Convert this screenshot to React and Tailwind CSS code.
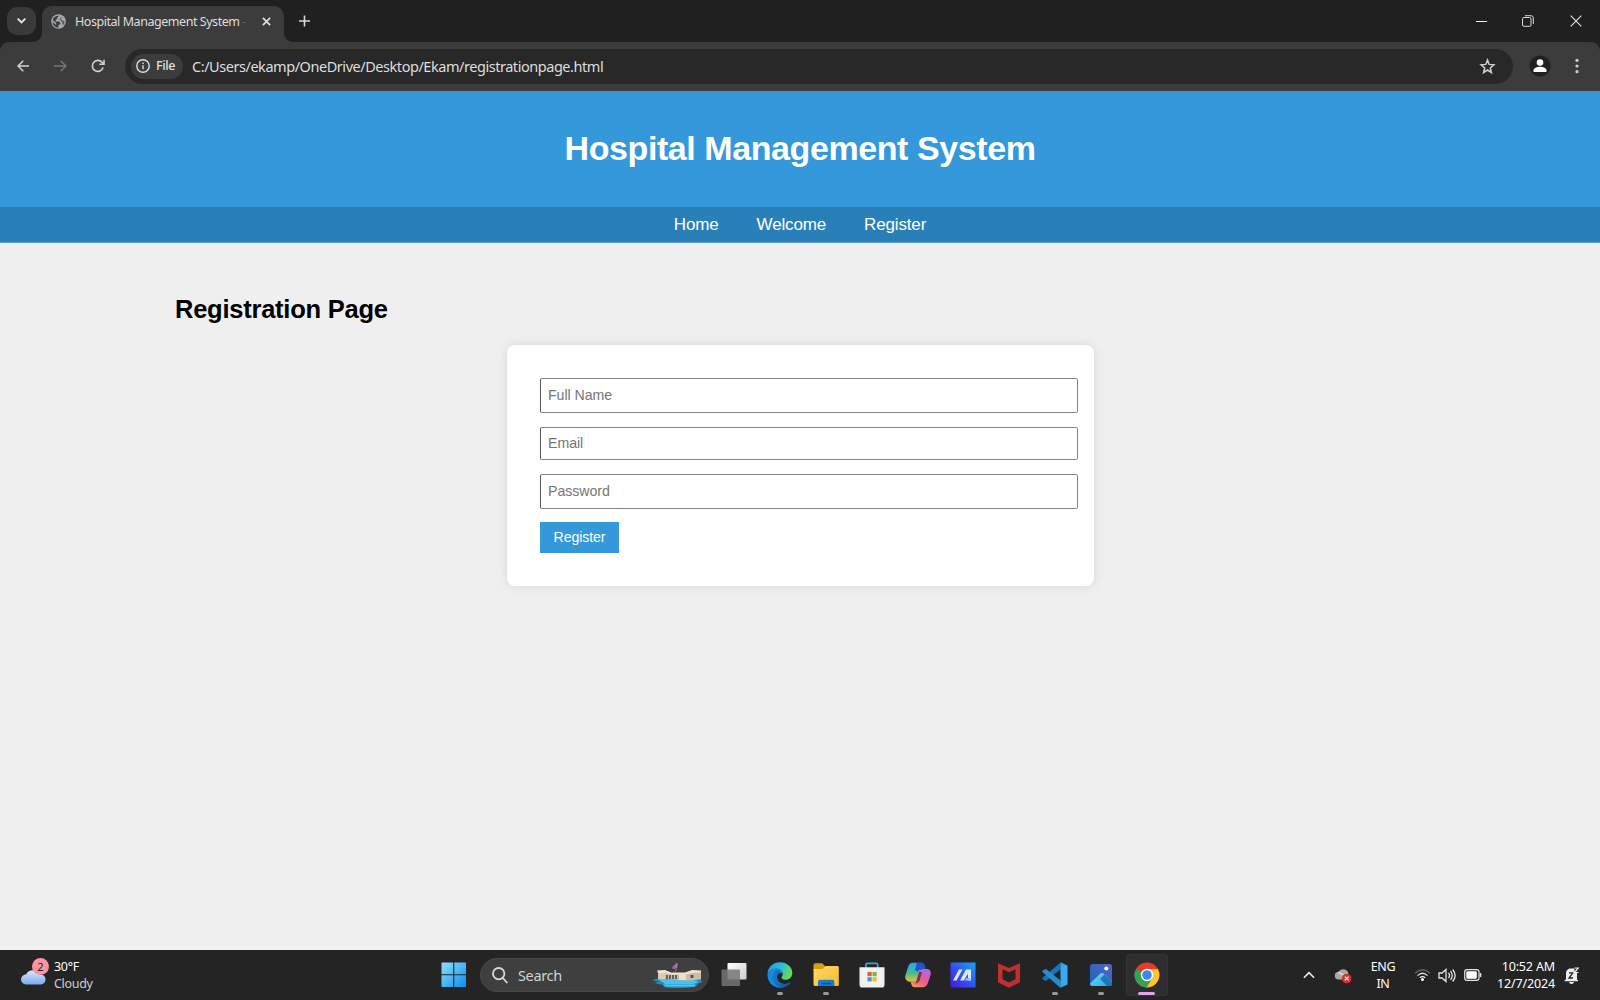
import React from 'react';

const ui = "font-['Noto_Sans','Open_Sans',sans-serif]";

function Globe() {
  return (
    <svg className="h-[15px] w-[15px] shrink-0" viewBox="0 0 15 15">
      <circle cx="7.5" cy="7.5" r="7.3" fill="#a4a8ad" />
      <path d="M8.300 1.800 6.300 3.300v1.500L4.600 6v1.500h3.600l1.100 1.500v1.500H7.800l-.6 3C4 13.300 1.600 10.900 1.500 7.900l3.700 3v-2L1.700 6C2.300 3.500 5 1.400 8.300 1.800z" fill="#3c3c3c" />
      <path d="m10.200 3 .1 2.300 1.200 1.500 1.900.2c.1 1.800-.4 3.100-1.300 4.300l-.8-1.600V8.200L9.700 6.600 8.800 4.500z" fill="#3c3c3c" opacity=".75" />
    </svg>
  );
}

function TabStrip() {
  return (
    <div className="flex h-[42px] items-start bg-[#202020] text-[#dedede]">
      <button className="ml-[7px] mt-[7px] flex h-7 w-[29px] items-center justify-center rounded-[10px] bg-[#3a3a3a]">
        <svg width="11" height="8" viewBox="0 0 11 8" fill="none" stroke="#e4e4e4" strokeWidth="1.9"><path d="M1.700 1.700 5.500 5.500l3.800-3.800" /></svg>
      </button>
      <div className="relative ml-[6px] mt-[6px] flex h-9 w-[242px] items-center rounded-t-[10px] bg-[#3c3c3c] pb-[6px] pl-[9px]">
        <svg className="absolute -left-[9px] bottom-0" width="9" height="9" viewBox="0 0 9 9"><path d="M9 0v9H0a9 9 0 0 0 9-9" fill="#3c3c3c" /></svg>
        <svg className="absolute -right-[9px] bottom-0" width="9" height="9" viewBox="0 0 9 9"><path d="M0 0v9h9a9 9 0 0 1-9-9" fill="#3c3c3c" /></svg>
        <Globe />
        <span className="ml-[9px] w-[173px] whitespace-nowrap pt-px text-[12.5px] leading-4 tracking-[-0.450px] text-[#dedede]">Hospital Management System <span className="text-[#66666a]">-</span></span>
        <svg className="ml-[14px]" width="9" height="9" viewBox="0 0 10 10" stroke="#dedede" strokeWidth="1.900"><path d="m1 1 8 8M9 1 1 9" /></svg>
      </div>
      <svg className="ml-[15px] mt-[15px]" width="11" height="12" viewBox="0 0 11 12" stroke="#d8d8d8" strokeWidth="1.600"><path d="M5.500.5v11M0 6h11" /></svg>
      <div className="ml-auto flex h-[41px] items-center pr-[18px]">
        <svg width="11" height="12" viewBox="0 0 11 12"><path d="M0 6.500h11" stroke="#fff" strokeWidth="1" /></svg>
        <svg className="ml-[35px]" width="12" height="12" viewBox="0 0 12 12" fill="none" stroke="#d8d8d8" strokeWidth="1"><rect x=".5" y="2.500" width="8.500" height="8.800" rx="1.300" /><path d="M3 .7h6q2.300 0 2.300 2.300v6" /></svg>
        <svg className="ml-[36px]" width="12" height="12" viewBox="0 0 12 12" stroke="#e0e0e0" strokeWidth="1.200"><path d="m.7.7 10.600 10.600M11.300.7.7 11.300" /></svg>
      </div>
    </div>
  );
}

function Toolbar() {
  return (
    <div className="bg-[#202020]">
      <div className="flex h-[49px] items-center rounded-t-[9px] bg-[#3c3c3c] pb-px">
        <svg className="ml-[17px]" width="12" height="12" viewBox="0 0 12 12" fill="none" stroke="#d2d2d2" strokeWidth="1.500"><path d="M12 6H1M6.300.7 1 6l5.300 5.300" /></svg>
        <svg className="ml-[25px]" width="13" height="12" viewBox="0 0 13 12" fill="none" stroke="#777" strokeWidth="1.500"><path d="M0 6h12M6.700.7 12 6l-5.300 5.300" /></svg>
        <svg className="ml-[24px]" width="14" height="14" viewBox="0 0 14 14" fill="none" stroke="#d2d2d2" strokeWidth="1.600"><path d="M12.100 8.500A5.500 5.500 0 1 1 11 3.300l1.700 1.800" /><path d="M13 .7v4.600H8.400" /></svg>
        <div className="ml-[20px] flex h-[35px] w-[1388px] items-center rounded-full bg-[#282828] pl-[6px]">
          <div className="flex h-[25px] w-[52px] items-center rounded-full bg-[#3c3c3c] pl-[5px]">
            <svg width="14" height="14" viewBox="0 0 14 14" fill="none" stroke="#dedede" strokeWidth="1.400"><circle cx="7" cy="7" r="6.200" /><path d="M7 6.200v4M7 3.600v1.300" /></svg>
            <span className="ml-[6px] text-[12.500px] font-medium leading-none tracking-[-0.400px] text-[#e2e2e2]">File</span>
          </div>
          <span className="ml-[9px] whitespace-nowrap text-[14.500px] leading-5 tracking-[-0.455px] text-[#dedede]">C:/Users/ekamp/OneDrive/Desktop/Ekam/registrationpage.html</span>
          <svg className="ml-auto mr-[17px]" width="17" height="17" viewBox="0 0 17 17" fill="none" stroke="#d0d0d0" strokeWidth="1.500"><path d="m8.500 2 1.700 4.400 4.700.4-3.600 3.100 1.100 4.600-3.900-2.500-3.900 2.500 1.100-4.600-3.600-3.100 4.700-.4z" /></svg>
        </div>
        <svg className="ml-[16px]" width="22" height="22" viewBox="0 0 22 22"><circle cx="11" cy="11" r="10.500" fill="#202020" /><circle cx="11" cy="7.500" r="3.300" fill="#fff" /><path d="M4.500 17v-1.600c0-2.200 3.500-3.600 6.500-3.600s6.500 1.400 6.500 3.600V17z" fill="#fff" /></svg>
        <svg className="ml-[24px]" width="4" height="16" viewBox="0 0 4 16" fill="#cfcfcf"><circle cx="2" cy="2.300" r="1.600" /><circle cx="2" cy="8" r="1.600" /><circle cx="2" cy="13.700" r="1.600" /></svg>
      </div>
    </div>
  );
}

const field = 'block w-[538px] rounded-[2px] border border-[#858585] border-l-[#555] bg-white pb-[2px] pl-[7px] text-[14.170px] tracking-[-0.050px] text-[#333] placeholder:text-[#757575]';

function Page() {
  return (
    <main className="flex-1 bg-[#efefef] font-['Liberation_Sans',sans-serif] text-black">
      <header className="flex h-[116px] items-center justify-center bg-[#3498db] pb-[2px] text-white">
        <h1 className="text-[34px] font-bold leading-[39px] tracking-[-0.420px]">Hospital Management System</h1>
      </header>
      <nav className="flex h-[36px] items-center justify-center gap-[38px] border-b border-[#5f9fc9] bg-[#2980b9] text-[17px] leading-5 tracking-[-0.150px] text-white">
        <a>Home</a><a>Welcome</a><a>Register</a>
      </nav>
      <section className="pl-[175px] pt-[51px]">
        <h2 className="text-[25.500px] font-bold leading-[30px] tracking-[-0.240px]">Registration Page</h2>
      </section>
      <form className="ml-[507px] mt-[21px] flex h-[241px] w-[587px] flex-col items-start rounded-[8px] bg-white pl-[33px] pt-[33px] shadow-[0_0_11px_rgba(0,0,0,0.1)]" onSubmit={(e) => e.preventDefault()}>
        <input className={field + ' h-[35px]'} placeholder="Full Name" />
        <input className={field + ' mt-[14px] h-[33px]'} placeholder="Email" />
        <input className={field + ' mt-[14px] h-[35px]'} placeholder="Password" type="password" />
        <button className="mt-[13px] h-[31px] w-[79px] bg-[#3498db] text-[14.170px] leading-none tracking-[-0.100px] text-white">Register</button>
      </form>
    </main>
  );
}

function Memorial() {
  return (
    <svg width="53" height="27" viewBox="0 0 53 27">
      <path d="M1 18.500q5-3 12-2h31q8 1 7 4l-4 1-2 3q-15 3-31 1l-3-3q-5 0-7-2l4-1z" fill="#2488bd" />
      <path d="M8 18h35l5 2-6 2H14z" fill="#48c2ec" />
      <path d="M12 22.500h32v2H15z" fill="#52c8ee" />
      <path d="M7 9.500 14 9l5 2h15l8-2 8 .5v8l-13 1-10-.5-20-1z" fill="#cdbda6" />
      <path d="M7 9h7v8.500H7z" fill="#dacbb4" />
      <path d="m6 8.500 8-.5 6 2.500h14l7-2.500 9 .500v2l-9 .5-7 1.500H20l-6-1.500H7z" fill="#f1e6d3" />
      <path d="M15 13h11v4H15z" fill="#655f5b" />
      <path d="M17.500 13v4m3-4v4m3-4v4" stroke="#d9c9b1" strokeWidth=".9" />
      <path d="M28 12h7v6h-7z" fill="#eaddc9" /><path d="M39.500 13h3v3h-3z" fill="#5b5550" />
      <path d="m21 5 4-4 2 .8-.8 4.200-5 1z" fill="#6260a5" /><path d="m22 5 4.500-2m-4 3.500L26 5" stroke="#df6582" />
      <path d="m26 1-1.500 9" stroke="#aaa" strokeWidth=".6" />
    </svg>
  );
}

const icons = {
  windows: <><defs><linearGradient id="win" x1="0" y1="0" x2="1" y2="1"><stop stopColor="#8ce0fb" /><stop offset="1" stopColor="#0a8df0" /></linearGradient></defs><path fill="url(#win)" d="M.5.5h11.700v11.700H.5zm12.800 0H25v11.700H13.300zM.5 13.300h11.700V25H.5zm12.800 0H25V25H13.300z" /></>,
  taskview: <><defs><linearGradient id="tv" x1="0" y1="0" x2="1" y2="1"><stop stopColor="#fff" /><stop offset="1" stopColor="#ccc" /></linearGradient></defs><rect x="6.500" y="1" width="19" height="16.500" rx="1" fill="url(#tv)" /><rect x=".5" y="7.500" width="18.500" height="16.500" rx="1" fill="#757575" fillOpacity=".85" /></>,
  edge: <><defs><linearGradient id="ed" x1="0" y1="0" x2="1" y2=".4"><stop stopColor="#2699df" /><stop offset=".55" stopColor="#2bbcdc" /><stop offset="1" stopColor="#67d957" /></linearGradient><linearGradient id="ed2" x1="0" x2="1"><stop stopColor="#137bd0" /><stop offset="1" stopColor="#0c4c9a" /></linearGradient></defs><path d="M.5 12C1 4.500 6.500.3 13 .3c7.300 0 12.300 5 12.300 10.600 0 4.100-3 6.800-6.800 6.800-3.200 0-4.500-1.400-3.800-2.700.7-1.200 1-2 1-3.300 0-2.800-2.600-5-6.200-5C5.500 6.700 2 8.800.5 12z" fill="url(#ed)" /><path d="M.5 12C2 8.300 5.500 6.700 9.500 6.700c3.600 0 6.200 2.200 6.200 5-1-1.400-4.700-1.100-5.500 2.100-1 4 2.600 8.700 8 8.200 2.300-.2 4-1 5.300-1.700-2 3.200-5.900 5.400-10.500 5.400C5.500 25.700 0 19.500.5 12z" fill="#168bdd" /><path d="M9.500 8.200C5.700 11.300 4.300 16 6.500 20c1.600 3 4.500 5 8 5.500 4-.2 7.200-2.300 9-5.200-1.300.7-3 1.500-5.300 1.700-5.400.5-9-4.200-8-8.200.6-2.400 2.500-3.200 4-2.900-1-2-2.700-2.800-4.700-2.700z" fill="url(#ed2)" /></>,
  explorer: <><defs><linearGradient id="fo" x1="0" y1="0" x2="1" y2="1"><stop stopColor="#ffdc65" /><stop offset="1" stopColor="#f6b832" /></linearGradient></defs><path d="M.5 3q0-1.800 1.800-1.800h6.800l2.700 2.600V8H.5z" fill="#d99a16" /><path d="M.5 7h9l3-3h12q1.300 0 1.300 1.300v17.500q0 1.200-1.300 1.200H2q-1.500 0-1.500-1.400z" fill="url(#fo)" /><path d="M5 24v-4q0-2.200 2.200-2.200h12q2.200 0 2.200 2.200v4z" fill="#187bcf" /><path d="M8.500 20.800h9.300v1.500H8.500z" fill="#0b4f91" /></>,
  store: <><path d="M7 6V2.500Q7 1.300 8.500 1.300h8.700q1.500 0 1.500 1.200V6" fill="none" stroke="#33a6dc" strokeWidth="1.700" /><path d="M.5 5.200h25v17.500q0 2.800-2.800 2.800H3.300q-2.800 0-2.800-2.800z" fill="#f1f1f1" /><path d="M8.500 10h4.200v4.200H8.500z" fill="#e9573e" /><path d="M13.500 10h4.200v4.200h-4.200z" fill="#7cb83c" /><path d="M8.500 15.200h4.200v4.200H8.500z" fill="#2e9ed9" /><path d="M13.500 15.200h4.200v4.200h-4.200z" fill="#f4b82f" /></>,
  copilot: <><defs><linearGradient id="co1" x1="0" y1="0" x2="0" y2="1"><stop stopColor="#23a9ef" /><stop offset=".55" stopColor="#49ba91" /><stop offset="1" stopColor="#e8c52d" /></linearGradient><linearGradient id="co2" x1="0" y1="1" x2=".6" y2="0"><stop stopColor="#ffa04f" /><stop offset=".5" stopColor="#ee5a88" /><stop offset="1" stopColor="#b565df" /></linearGradient></defs><path d="M8 .8h9L12.300 17.500q-.8 2.200-3 2.200H4.200C1 19.200-.5 16.500.5 13L2.700 6Q4 .8 8 .8z" fill="url(#co1)" /><path d="M12 .8h5q2 0 2.700 2.300L21 7h-5q-2.300 0-3.200 2.700L10 8z" fill="#1e54d1" /><path d="M18 25.200H9.500q-2.200 0-3-2.500l-1-3h3q2.300 0 3.100-2.200l2.300-7.800Q14.800 7 17 7h5c3.300.2 4.500 2.800 3.500 6.300l-2.300 7q-1.400 4.900-5.200 4.900z" fill="url(#co2)" /><path d="m14.300 10-3 9.800q-.5 1.600-2 2.400l3-1.200q1.700-.7 2.300-2.600L17 10z" fill="#242424" opacity=".65" /></>,
  myasus: <><defs><linearGradient id="as" x1="0" y1="1" x2="1" y2="0"><stop stopColor="#4a16e8" /><stop offset=".5" stopColor="#3155f4" /><stop offset="1" stopColor="#18a8f6" /></linearGradient></defs><path d="M.5.5h25v25H.5z" fill="url(#as)" /><path d="m3 18.500 6-11h3.500l-6 11zm7 0 6-11H21v11h-3v-7l-4.200 7z" fill="#dce9ff" /><path d="m14.500 18.500 2-2.500H20v2.500z" fill="#92b9ff" /></>,
  mcafee: <path d="M2 1.200 13 6 24 1.200v19L13 25.700 2 20.200zm4.500 6v10L13 20.500l6.500-3.300v-10L13 10.300z" fill="#c22f31" />,
  vscode: <><path d="M18.500 7.500 4 19 .5 17.200v-1.500L18.500.5z" fill="#1774b8" /><path d="M.5 10V8.600L4 7l14.500 11.500V26z" fill="#238fd2" /><path d="m18.500.3 7 3.200v19l-7 3.200z" fill="#36a9f2" /></>,
  photos: <><defs><linearGradient id="ph" x1="0" y1="1" x2="1" y2="0"><stop stopColor="#1468bd" /><stop offset="1" stopColor="#5862be" /></linearGradient><linearGradient id="ph2" x1="0" y1="0" x2="1" y2="1"><stop stopColor="#6dd8fa" /><stop offset="1" stopColor="#2ca7de" /></linearGradient></defs><rect x="2" y="2" width="22" height="22" rx="2.500" fill="url(#ph)" /><path d="m2 21.500 10.500-10q1.500-1.500 3 0l8.500 8v2q0 2.500-2.500 2.500h-17Q2 24 2 21.500z" fill="url(#ph2)" /><path d="m12 17 4.500-4.500L24 20v1.500q0 2.500-2.500 2.500H19z" fill="#1765ac" opacity=".8" /><circle cx="18.300" cy="6.600" r="2" fill="#fff" /></>,
  chrome: <><circle cx="13" cy="13" r="12.500" fill="#e53b2e" /><path d="M13 13 2.200 6.700A12.500 12.500 0 0 0 12.500 25.500l6-9.500z" fill="#33a353" /><path d="M13 7h10.800A12.500 12.500 0 0 1 12.500 25.500L18.500 16z" fill="#fcc72b" /><circle cx="13" cy="13" r="6.200" fill="#fff" /><circle cx="13" cy="13" r="4.800" fill="#4285e8" /></>,
};

function AppIcon({ name, running, active }) {
  return (
    <div className="flex w-[45.800px] justify-center">
      <div className={'relative flex h-[42px] w-[42px] items-center justify-center rounded-[4px] ' + (active ? 'bg-[#2e2e2e] ring-1 ring-inset ring-[#353535]' : '')}>
        <svg width="26" height="26" viewBox="0 0 26 26">{icons[name]}</svg>
        {running && <i className="absolute bottom-px h-[3px] w-[6px] rounded-full bg-[#999]" />}
        {active && <i className="absolute bottom-px h-[3px] w-[17px] rounded-full bg-[#dfa5e5]" />}
      </div>
    </div>
  );
}

function Taskbar() {
  return (
    <footer className="flex h-[50px] items-center bg-[#242424] text-white">
      <div className="flex w-[440px] items-center pl-[20px]">
        <div className="relative mb-[6px] h-[26px] w-[28px]">
          <svg className="absolute bottom-0 left-0" width="27" height="17" viewBox="0 0 27 17"><defs><linearGradient id="cl" x1="0" y1="0" x2="0" y2="1"><stop stopColor="#dce6ff" /><stop offset="1" stopColor="#7aa9ed" /></linearGradient></defs><path d="M6 16.500a5 5 0 0 1 0-10A8 8 0 0 1 20 6.500a5 5 0 0 1 1 10z" fill="url(#cl)" /></svg>
          <span className="absolute -right-[1px] -top-[1px] flex h-[17px] w-[17px] items-center justify-center rounded-full bg-[#ff929d] text-[11px] leading-none text-[#302024]">2</span>
        </div>
        <div className="mb-px ml-[6px] text-[12.500px] leading-[17px] tracking-[-0.300px]"><div>30°F</div><div className="text-[#cecece]">Cloudy</div></div>
      </div>
      <svg className="ml-[1px]" width="26" height="26" viewBox="0 0 26 26">{icons.windows}</svg>
      <div className="ml-[13px] flex h-[34px] w-[229px] items-center rounded-full border border-[#484848] bg-[#3f3f3f] pl-[11px] pr-[4px]">
        <svg width="16" height="17" viewBox="0 0 16 17" fill="none" stroke="#dadada" strokeWidth="1.800"><circle cx="6.700" cy="6.700" r="5.700" /><path d="m10.800 11 4.500 5" /></svg>
        <span className="ml-[10px] text-[14.500px] leading-none tracking-[-0.350px] text-[#d2d2d2]">Search</span>
        <span className="ml-auto"><Memorial /></span>
      </div>
      <div className="ml-[2.600px] flex">
        <AppIcon name="taskview" />
        <AppIcon name="edge" running />
        <AppIcon name="explorer" running />
        <AppIcon name="store" />
        <AppIcon name="copilot" />
        <AppIcon name="myasus" />
        <AppIcon name="mcafee" />
        <AppIcon name="vscode" running />
        <AppIcon name="photos" running />
        <AppIcon name="chrome" active />
      </div>
      <div className="ml-auto flex items-center pr-[20px]">
        <svg width="12" height="8" viewBox="0 0 13 8" fill="none" stroke="#eee" strokeWidth="1.700"><path d="m1 7 5.500-5.500L12 7" /></svg>
        <svg className="ml-[19px] mt-[2px]" width="18" height="16" viewBox="0 0 18 16"><path d="M4.500 11.500a3.700 3.700 0 0 1 0-7.400 5.300 5.300 0 0 1 9.500 0l1 7.400z" fill="#aaa" /><path d="M4 4.300 14 9" stroke="#cfcfcf" strokeWidth="2" /><circle cx="12.700" cy="10.500" r="4.800" fill="#d52e35" /><path d="m10.800 8.600 3.800 3.800m0-3.800-3.800 3.800" stroke="#fff" strokeWidth="1.100" /></svg>
        <div className="ml-[18px] w-[26px] whitespace-nowrap text-center text-[12.500px] leading-[17px] tracking-[-0.300px]"><div>ENG</div><div>IN</div></div>
        <svg className="ml-[18px]" width="17" height="14" viewBox="0 0 17 14" fill="none" strokeWidth="1.300"><path d="M1 5.200q7.500-7 15 0" stroke="#666" /><path d="M3.500 7.600q5-4.800 10 0" stroke="#ddd" /><path d="M5.900 9.800q2.600-2.400 5.200 0" stroke="#eee" /><circle cx="8.500" cy="11.500" r="1.500" fill="#fff" /></svg>
        <svg className="ml-[7px]" width="18" height="15" viewBox="0 0 18 15" fill="none" stroke="#e2e2e2" strokeWidth="1.300"><path d="M1 5h3l4-3.500v12L4 10H1z" /><path d="M10.500 5q2 2.500 0 5M12.500 3.200q3.500 4.300 0 8.600M14.700 1.500q4.800 6 0 12" /></svg>
        <svg className="ml-[8px]" width="18" height="12" viewBox="0 0 18 12" fill="none" stroke="#e4e4e4"><rect x=".7" y=".7" width="14.300" height="10.600" rx="2.300" strokeWidth="1.200" /><rect x="2.300" y="2.300" width="10.500" height="7.400" rx="1" fill="#fff" stroke="none" /><path d="M16.500 4v4" strokeWidth="1.500" /></svg>
        <div className="ml-[14px] w-[59px] whitespace-nowrap text-right text-[12.500px] leading-[17px] tracking-[-0.150px]"><div>10:52 AM</div><div>12/7/2024</div></div>
        <svg className="ml-[9px]" width="16" height="17" viewBox="0 0 16 17"><path d="M2 6.500C2 3.500 4 1.500 7 1.500h3.500V5H13v7.200l1 1.300v.800H.5v-.8L2 12.200zM5 15h5q-.5 2-2.500 2T5 15z" fill="#eee" /><path d="M5 5.800h3.800L5 11h4" fill="none" stroke="#242424" strokeWidth="1.300" /><path d="M10.500 1h3.700l-3.700 4.500h4" fill="none" stroke="#eee" strokeWidth="1.200" /></svg>
      </div>
    </footer>
  );
}

export default function App() {
  return (
    <div className={'flex h-[1000px] w-[1600px] flex-col overflow-hidden ' + ui}>
      <TabStrip />
      <Toolbar />
      <Page />
      <Taskbar />
    </div>
  );
}
